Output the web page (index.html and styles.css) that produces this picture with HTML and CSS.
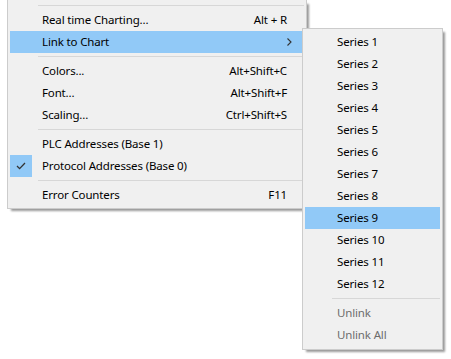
FILE: index.html
```html
<!DOCTYPE html>
<html>
<head>
<meta charset="utf-8">
<link rel="stylesheet" href="styles.css">
</head>
<body>
<div class="menu main">
  <div class="sep"></div>
  <div class="item"><span class="check"></span><span class="label">Real time Charting...</span><span class="key">Alt + R</span></div>
  <div class="item hot"><span class="check"></span><span class="label">Link to Chart</span><span class="key"><svg class="arrow" width="5" height="8" viewBox="0 0 5 8"><polyline points="0.5,0.5 4,4 0.5,7.5" fill="none" stroke="#333" stroke-width="1.1"/></svg></span></div>
  <div class="sep"></div>
  <div class="item"><span class="check"></span><span class="label">Colors...</span><span class="key">Alt+Shift+C</span></div>
  <div class="item"><span class="check"></span><span class="label">Font...</span><span class="key">Alt+Shift+F</span></div>
  <div class="item"><span class="check"></span><span class="label">Scaling...</span><span class="key">Ctrl+Shift+S</span></div>
  <div class="sep"></div>
  <div class="item"><span class="check"></span><span class="label">PLC Addresses (Base 1)</span><span class="key"></span></div>
  <div class="item"><span class="check on"><svg width="10" height="8" viewBox="0 0 10 8"><polyline points="1,4 3.6,6.6 9,1" fill="none" stroke="#333" stroke-width="1.3"/></svg></span><span class="label">Protocol Addresses (Base 0)</span><span class="key"></span></div>
  <div class="sep"></div>
  <div class="item"><span class="check"></span><span class="label">Error Counters</span><span class="key">F11</span></div>
</div>
<div class="menu sub">
  <div class="item"><span class="check"></span><span class="label">Series 1</span></div>
  <div class="item"><span class="check"></span><span class="label">Series 2</span></div>
  <div class="item"><span class="check"></span><span class="label">Series 3</span></div>
  <div class="item"><span class="check"></span><span class="label">Series 4</span></div>
  <div class="item"><span class="check"></span><span class="label">Series 5</span></div>
  <div class="item"><span class="check"></span><span class="label">Series 6</span></div>
  <div class="item"><span class="check"></span><span class="label">Series 7</span></div>
  <div class="item"><span class="check"></span><span class="label">Series 8</span></div>
  <div class="item hot"><span class="check"></span><span class="label">Series 9</span></div>
  <div class="item"><span class="check"></span><span class="label">Series 10</span></div>
  <div class="item"><span class="check"></span><span class="label">Series 11</span></div>
  <div class="item"><span class="check"></span><span class="label">Series 12</span></div>
  <div class="sep"></div>
  <div class="item disabled"><span class="check"></span><span class="label">Unlink</span></div>
  <div class="item disabled"><span class="check"></span><span class="label">Unlink All</span></div>
</div>
</body>
</html>
```
FILE: styles.css
```css
html, body {
  margin: 0;
  padding: 0;
  background: #ffffff;
}
body {
  position: relative;
  width: 451px;
  height: 359px;
  overflow: hidden;
  font-family: "Noto Sans", "Open Sans", sans-serif;
  font-size: 11.5px;
  letter-spacing: -0.15px;
  color: #000;
}
.menu {
  background: #f0f0f0;
  border: 1px solid #cccccc;
  box-shadow: 3px 3px 2px -1px rgba(0, 0, 0, 0.4);
  padding: 2px;
  box-sizing: border-box;
}
.main {
  margin-left: 7px;
  width: 300px;
  border-top: none;
  padding-bottom: 2px;
}
.sub {
  position: absolute;
  left: 302px;
  top: 28px;
  width: 141px;
  padding-top: 2px;
  padding-bottom: 3px;
}
.item {
  display: flex;
  align-items: center;
  height: 22px;
  line-height: 22px;
  white-space: nowrap;
}
.item.hot {
  background: #91c9f7;
}
.item.disabled {
  color: #6d6d6d;
}
.check {
  width: 22px;
  height: 22px;
  flex: none;
  display: flex;
  align-items: center;
  justify-content: center;
  margin-right: 10px;
}
.check.on {
  background: #91c9f7;
}
.label {
  flex: 1;
}
.key {
  padding-right: 17px;
  display: flex;
  align-items: center;
}
.arrow {
  margin-right: -10px;
}
.sep {
  height: 1px;
  background: #d7d7d7;
  margin: 3px 0 3px 28px;
}
.sub .sep {
  margin-left: 27px;
}
```
